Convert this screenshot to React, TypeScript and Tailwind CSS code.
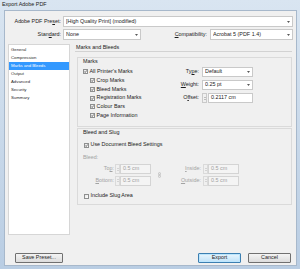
import React from 'react';

function Arrow() {
  return (
    <svg viewBox="0 0 4 2" className="w-[3px] h-[2px] shrink-0">
      <path d="M0 0 L4 0 L2 2 Z" fill="#222" />
    </svg>
  );
}

function Select({ value, className }: { value: string; className: string }) {
  return (
    <div className={'h-full bg-white border border-[#c9c9c9] flex items-center pl-[2px] pr-[2px] ' + className}>
      <span className="flex-1 whitespace-nowrap overflow-hidden">{value}</span>
      <Arrow />
    </div>
  );
}

function Check({ checked }: { checked?: boolean }) {
  return (
    <span className="w-[5px] h-[5px] shrink-0 border border-[#8e8f8f] bg-gradient-to-br from-[#e6e6e6] to-white flex items-center justify-center">
      {checked && (
        <svg viewBox="0 0 3 3" className="w-[3px] h-[3px]">
          <path d="M0.3 1.5 L1.2 2.5 L2.8 0.4" stroke="#3a3a3a" strokeWidth="0.7" fill="none" />
        </svg>
      )}
    </span>
  );
}

function CheckRow({ label, checked, className = '' }: { label: string; checked?: boolean; className?: string }) {
  return (
    <div className={'flex items-center gap-[1.5px] ' + className}>
      <Check checked={checked} />
      <span className="whitespace-nowrap">{label}</span>
    </div>
  );
}

function Spinner({ disabled }: { disabled?: boolean }) {
  const c = disabled ? '#b5b5b5' : '#8a8a8a';
  return (
    <div className={'w-[5px] h-full border flex flex-col items-center justify-center gap-[1px] ' + (disabled ? 'border-[#dadada]' : 'border-[#c9c9c9]')}>
      <svg viewBox="0 0 2 1" className="w-[2px] h-[1px]">
        <path d="M0 1 L1 0 L2 1 Z" fill={c} />
      </svg>
      <svg viewBox="0 0 2 1" className="w-[2px] h-[1px]">
        <path d="M0 0 L2 0 L1 1 Z" fill={c} />
      </svg>
    </div>
  );
}

function Mn({ pre, u, post }: { pre: string; u: string; post: string }) {
  return (
    <span className="whitespace-nowrap">
      {pre}
      <span className="underline underline-offset-[0.5px]">{u}</span>
      {post}
    </span>
  );
}

function BleedField({ label, labelW }: { label: React.ReactNode; labelW: string }) {
  return (
    <div className="flex items-center h-[10px]">
      <div className={'text-right text-[#a3a3a3] ' + labelW}>{label}</div>
    </div>
  );
}

export default function App() {
  const nav = ['General', 'Compression', 'Marks and Bleeds', 'Output', 'Advanced', 'Security', 'Summary'];
  return (
    <div className="w-[300px] h-[269px] flex flex-col bg-gradient-to-b from-[#d9e5f1] to-[#b9cde3] font-[family-name:'Liberation_Sans',Arial,sans-serif] text-[5.4px] leading-none text-[#1b1b1b] overflow-hidden">
      <div className="h-[10px] pl-[2px] flex items-center">Export Adobe PDF</div>
      <div className="flex-1 ml-[4px] mr-[3px] mb-[3px] bg-[#f0f0f0] border border-[#a7b8cb] flex flex-col">
        {/* preset */}
        <div className="mt-[5px] h-[11px] flex items-center">
          <div className="w-[56px] text-right">
            <Mn pre="Adobe PDF Pre" u="s" post="et:" />
          </div>
          <Select value="[High Quality Print] (modified)" className="ml-[2px] w-[230px]" />
        </div>
        <div className="mt-[2px] h-[11px] flex items-center w-[288px]">
          <div className="w-[56px] text-right">
            <Mn pre="Stan" u="d" post="ard:" />
          </div>
          <Select value="None" className="ml-[2px] w-[78px]" />
          <div className="flex-1 text-right">
            <Mn pre="" u="C" post="ompatibility:" />
          </div>
          <Select value="Acrobat 5 (PDF 1.4)" className="ml-[3px] w-[83px]" />
        </div>

        {/* main */}
        <div className="mt-[4px] h-[191px] flex pl-[3px]">
          <div className="w-[62px] h-full bg-white border border-[#d6d6d6] pt-[1px] text-[4.3px] text-[#2a2a2a]">
            {nav.map((n) => (
              <div
                key={n}
                className={'h-[8px] pl-[2px] flex items-center ' + (n === 'Marks and Bleeds' ? 'bg-[#3399ff] text-white' : '')}
              >
                {n}
              </div>
            ))}
          </div>

          <div className="ml-[5px] w-[217px] flex flex-col">
            <div className="h-[8px] pl-[1px] flex items-center border-b border-[#d2d2d2]">Marks and Bleeds</div>

            {/* Marks group */}
            <div className="mt-[5px] ml-[2px] h-[70px] border border-[#dadada] flex flex-col">
              <div className="h-[7px] pl-[5px] flex items-center">Marks</div>
              <div className="flex">
                <div className="flex-1 pl-[5px] pt-[2.5px] flex flex-col">
                  <CheckRow checked label="All Printer's Marks" className="h-[8.75px]" />
                  <CheckRow checked label="Crop Marks" className="h-[8.75px] pl-[7px]" />
                  <CheckRow checked label="Bleed Marks" className="h-[8.75px] pl-[7px]" />
                  <CheckRow checked label="Registration Marks" className="h-[8.75px] pl-[7px]" />
                  <CheckRow checked label="Colour Bars" className="h-[8.75px] pl-[7px]" />
                  <CheckRow checked label="Page Information" className="h-[8.75px] pl-[7px]" />
                </div>
                <div className="w-[84px] mr-[38px] pt-[2px] flex flex-col gap-[3px]">
                  <div className="h-[10px] flex items-center">
                    <div className="w-[30px] text-right">
                      <Mn pre="Ty" u="p" post="e:" />
                    </div>
                    <Select value="Default" className="ml-[3px] w-[51px]" />
                  </div>
                  <div className="h-[10px] flex items-center">
                    <div className="w-[30px] text-right">
                      <Mn pre="" u="W" post="eight:" />
                    </div>
                    <Select value="0.25 pt" className="ml-[3px] w-[51px]" />
                  </div>
                  <div className="h-[10px] flex items-center">
                    <div className="w-[30px] text-right">
                      <Mn pre="O" u="f" post="fset:" />
                    </div>
                    <div className="ml-[3px] h-full">
                      <Spinner />
                    </div>
                    <div className="ml-[1px] w-[45px] h-full bg-white border border-[#c9c9c9] flex items-center pl-[2px]">
                      0.2117 cm
                    </div>
                  </div>
                </div>
              </div>
            </div>

            {/* Bleed and slug */}
            <div className="mt-[1px] ml-[2px] h-[77px] border border-[#dadada] flex flex-col">
              <div className="h-[8px] pl-[5px] flex items-center">Bleed and Slug</div>
              <CheckRow checked label="Use Document Bleed Settings" className="mt-[3.5px] h-[9px] pl-[6px]" />
              <div className="mt-[4.5px] h-[8px] pl-[5px] flex items-center text-[#a3a3a3]">Bleed:</div>
              <div className="mt-[2px] flex">
                <div className="flex flex-col gap-[1.5px]">
                  {[
                    <Mn key="t" pre="To" u="p" post=":" />,
                    <Mn key="b" pre="" u="B" post="ottom:" />,
                  ].map((l, i) => (
                    <div key={i} className="flex items-center h-[10px]">
                      <div className="w-[36px] text-right text-[#a3a3a3]">{l}</div>
                      <div className="ml-[1px] h-full">
                        <Spinner disabled />
                      </div>
                      <div className="w-[31px] h-full bg-[#f4f4f4] border border-[#d4d4d4] flex items-center pl-[2px] text-[#a0a0a0]">
                        0.5 cm
                      </div>
                    </div>
                  ))}
                </div>
                <div className="ml-[7px] w-[4px] flex items-center">
                  <svg viewBox="0 0 4 7" className="w-[3px] h-[6px]">
                    <rect x="0.7" y="0.4" width="2.6" height="2.8" rx="0.8" fill="none" stroke="#a8a8a8" strokeWidth="0.7" />
                    <rect x="0.7" y="3.8" width="2.6" height="2.8" rx="0.8" fill="none" stroke="#a8a8a8" strokeWidth="0.7" />
                  </svg>
                </div>
                <div className="flex flex-col gap-[1.5px]">
                  {[
                    <Mn key="i" pre="" u="I" post="nside:" />,
                    <Mn key="o" pre="" u="O" post="utside:" />,
                  ].map((l, i) => (
                    <div key={i} className="flex items-center h-[10px]">
                      <div className="w-[39px] text-right text-[#a3a3a3]">{l}</div>
                      <div className="ml-[2px] h-full">
                        <Spinner disabled />
                      </div>
                      <div className="w-[31px] h-full bg-[#f4f4f4] border border-[#d4d4d4] flex items-center pl-[2px] text-[#a0a0a0]">
                        0.5 cm
                      </div>
                    </div>
                  ))}
                </div>
              </div>
              <CheckRow label="Include Slug Area" className="mt-[6px] h-[9px] pl-[6px]" />
            </div>
          </div>
        </div>

        {/* buttons */}
        <div className="mt-[18px] h-[10px] flex">
          <button className="ml-[10px] w-[48px] h-full rounded-[1px] border border-[#707070] bg-gradient-to-b from-[#f4f4f4] to-[#dcdcdc] text-[5.4px] leading-none text-[#1b1b1b]">
            Save Preset...
          </button>
          <div className="flex-1" />
          <button className="w-[43px] h-full rounded-[1px] border border-[#3c7fb1] bg-gradient-to-b from-[#e9f5fd] to-[#bfe2f8] text-[5.4px] leading-none text-[#1b1b1b] shadow-[inset_0_0_0_1px_#bde6fd]">
            Export
          </button>
          <button className="ml-[7px] mr-[5px] w-[43px] h-full rounded-[1px] border border-[#707070] bg-gradient-to-b from-[#f4f4f4] to-[#dcdcdc] text-[5.4px] leading-none text-[#1b1b1b]">
            Cancel
          </button>
        </div>
      </div>
    </div>
  );
}
